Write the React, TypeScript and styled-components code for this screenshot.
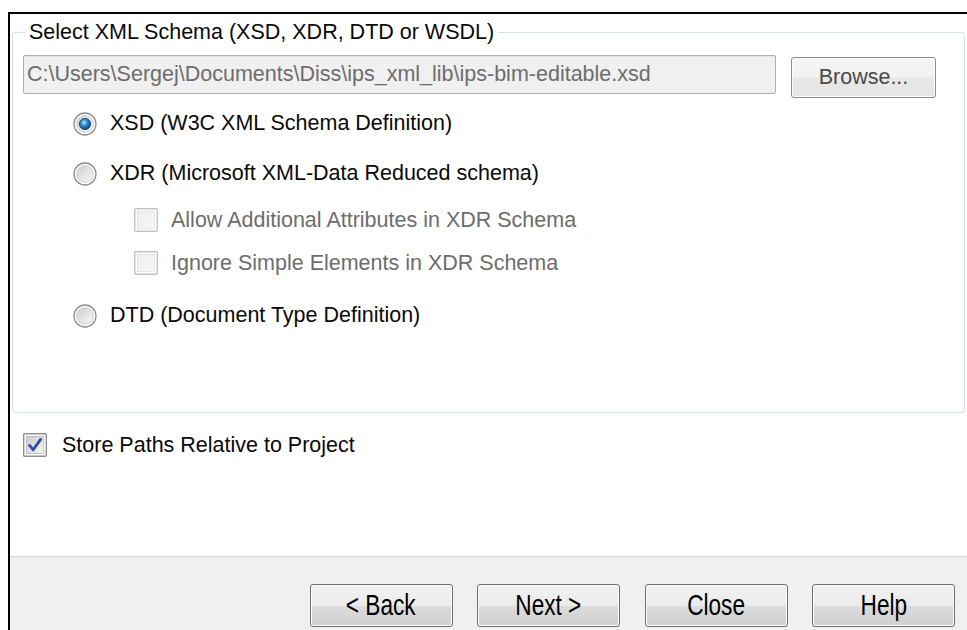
import React, { useId } from "react";
import styled, { createGlobalStyle } from "styled-components";

const GlobalStyle = createGlobalStyle`
  html, body {
    margin: 0;
    padding: 0;
    background: #ffffff;
  }
  body {
    font-family: "Liberation Sans", Arial, sans-serif;
    -webkit-font-smoothing: antialiased;
  }
`;

const Screen = styled.div`
  width: 967px;
  height: 630px;
  overflow: hidden;
  box-sizing: border-box;
  padding: 12px 0 0 8px;
  background: #ffffff;
`;

const Frame = styled.div`
  height: 100%;
  box-sizing: border-box;
  display: flex;
  flex-direction: column;
  border-top: 2px solid #000000;
  border-left: 2px solid #000000;
`;

const Body = styled.div`
  flex: 1;
  display: flex;
  flex-direction: column;
  background: #ffffff;
  padding: 6px 2px 0 2px;
`;

const GroupBox = styled.fieldset`
  margin: 0;
  min-width: 0;
  border: 1px solid #d5dfe5;
  border-radius: 3px;
  padding: 11px 28px 71px 10px;
`;

const GroupTitle = styled.legend`
  margin-left: 2px;
  padding: 0 4px;
  font-size: 21.5px;
  line-height: 24px;
  color: #0a0a0a;
`;

const PathRow = styled.div`
  display: flex;
  align-items: flex-start;
  gap: 15px;
`;

const PathField = styled.input`
  flex: 1;
  min-width: 0;
  height: 39px;
  box-sizing: border-box;
  margin: 0;
  padding: 0 3px;
  border: 1px solid #adb0b5;
  border-radius: 2px;
  background: #f0f0f0;
  box-shadow: inset 0 1px 1px rgba(0, 0, 0, 0.06);
  font-family: "Liberation Sans", Arial, sans-serif;
  font-size: 21.5px;
  color: #6d6d6d;
  outline: none;
`;

const DialogButton = styled.button<{ $wide?: boolean }>`
  flex: none;
  box-sizing: border-box;
  width: ${(p) => (p.$wide ? "145px" : "143px")};
  height: ${(p) => (p.$wide ? "41px" : "43px")};
  margin: ${(p) => (p.$wide ? "2px 0 0" : "0")};
  padding: 0;
  border: 1px solid ${(p) => (p.$wide ? "#8d8d8d" : "#707070")};
  border-radius: 3px;
  background: ${(p) =>
    p.$wide
      ? "linear-gradient(#f6f6f6 0%, #f1f1f1 50%, #e9e9e9 50%, #e4e4e4 100%)"
      : "linear-gradient(#f2f2f2 0%, #ebebeb 50%, #dddddd 50%, #cfcfcf 100%)"};
  box-shadow: inset 0 0 0 1px #fcfcfc;
  font-family: "Liberation Sans", Arial, sans-serif;
  color: ${(p) => (p.$wide ? "#4a4a4a" : "#000000")};
  font-size: ${(p) => (p.$wide ? "21.5px" : "29px")};
  display: flex;
  align-items: center;
  justify-content: center;
`;

const CondensedLabel = styled.span`
  display: inline-block;
  transform: scaleX(0.78);
  white-space: nowrap;
`;

const Options = styled.div`
  display: flex;
  flex-direction: column;
  margin-top: 0.5px;
  padding-left: 50px;
`;

const SubOptions = styled.div`
  display: flex;
  flex-direction: column;
  padding: 0 0 6px 61px;
`;

const OptionRow = styled.label<{ $radio?: boolean }>`
  display: flex;
  align-items: center;
  gap: 13px;
  height: ${(p) => (p.$radio ? "50px" : "43px")};
  font-size: 21.5px;
`;

const OptionText = styled.span<{ $disabled?: boolean }>`
  color: ${(p) => (p.$disabled ? "#6d6d6d" : "#0a0a0a")};
  white-space: nowrap;
`;

const StoreRow = styled.label`
  display: flex;
  align-items: center;
  gap: 15px;
  height: 43px;
  margin: 11px 0 0 11px;
  font-size: 21.5px;
  color: #0a0a0a;
`;

const Footer = styled.div`
  flex: none;
  height: 74px;
  box-sizing: border-box;
  display: flex;
  justify-content: flex-end;
  align-items: flex-start;
  gap: 24.5px;
  padding: 27px 12px 0 0;
  border-top: 1px solid #dadada;
  background: #f0f0f0;
`;

function RadioMark({ checked }: { checked?: boolean }) {
  const id = useId().replace(/:/g, "");
  return (
    <svg width="24" height="24" viewBox="0 0 24 24" style={{ flex: "none" }}>
      <defs>
        <linearGradient id={`face${id}`} x1="0" y1="0" x2="1" y2="1">
          <stop offset="0" stopColor="#cfcfcf" />
          <stop offset="1" stopColor="#f8f8f8" />
        </linearGradient>
        <radialGradient id={`dot${id}`} cx="0.42" cy="0.38" r="0.65">
          <stop offset="0" stopColor="#b7e3fb" />
          <stop offset="0.45" stopColor="#2f8ad0" />
          <stop offset="1" stopColor="#0b3b69" />
        </radialGradient>
      </defs>
      <circle cx="12" cy="12" r="11" fill="#fdfdfd" stroke="#8e8e8e" strokeWidth="1.3" />
      <circle cx="12" cy="12" r="8.3" fill={`url(#face${id})`} stroke="#c4c4c4" strokeWidth="0.8" />
      {checked && (
        <circle cx="12" cy="12" r="5.6" fill={`url(#dot${id})`} stroke="#17466f" strokeWidth="0.9" />
      )}
    </svg>
  );
}

function CheckMark({ checked, disabled }: { checked?: boolean; disabled?: boolean }) {
  const id = useId().replace(/:/g, "");
  return (
    <svg width="24" height="24" viewBox="0 0 24 24" style={{ flex: "none" }}>
      <defs>
        <linearGradient id={`box${id}`} x1="0" y1="0" x2="1" y2="1">
          <stop offset="0" stopColor={disabled ? "#ececec" : "#cbcbcb"} />
          <stop offset="1" stopColor={disabled ? "#f9f9f9" : "#f6f6f6"} />
        </linearGradient>
      </defs>
      <rect x="0.7" y="0.7" width="22.6" height="22.6" rx="1" fill="#ffffff" stroke={disabled ? "#c2c2c2" : "#8e8f8f"} strokeWidth="1.4" />
      <rect x="3.5" y="3.5" width="17" height="17" fill={`url(#box${id})`} stroke={disabled ? "#dedede" : "#b4b4b4"} strokeWidth="0.8" />
      {checked && (
        <path
          d="M6.6 12.4 L10.2 16.8 L17.6 6.4"
          fill="none"
          stroke="#2f4f9e"
          strokeWidth="2.8"
          strokeLinecap="round"
          strokeLinejoin="round"
        />
      )}
    </svg>
  );
}

export default function App() {
  return (
    <>
      <GlobalStyle />
      <Screen>
        <Frame>
          <Body>
            <GroupBox>
              <GroupTitle>Select XML Schema (XSD, XDR, DTD or WSDL)</GroupTitle>
              <PathRow>
                <PathField
                  readOnly
                  value="C:\Users\Sergej\Documents\Diss\ips_xml_lib\ips-bim-editable.xsd"
                />
                <DialogButton $wide>Browse...</DialogButton>
              </PathRow>
              <Options>
                <OptionRow $radio>
                  <RadioMark checked />
                  <OptionText>XSD (W3C XML Schema Definition)</OptionText>
                </OptionRow>
                <OptionRow $radio>
                  <RadioMark />
                  <OptionText>XDR (Microsoft XML-Data Reduced schema)</OptionText>
                </OptionRow>
                <SubOptions>
                  <OptionRow>
                    <CheckMark disabled />
                    <OptionText $disabled>Allow Additional Attributes in XDR Schema</OptionText>
                  </OptionRow>
                  <OptionRow>
                    <CheckMark disabled />
                    <OptionText $disabled>Ignore Simple Elements in XDR Schema</OptionText>
                  </OptionRow>
                </SubOptions>
                <OptionRow $radio>
                  <RadioMark />
                  <OptionText>DTD (Document Type Definition)</OptionText>
                </OptionRow>
              </Options>
            </GroupBox>
            <StoreRow>
              <CheckMark checked />
              <span>Store Paths Relative to Project</span>
            </StoreRow>
          </Body>
          <Footer>
            <DialogButton>
              <CondensedLabel>&lt; Back</CondensedLabel>
            </DialogButton>
            <DialogButton>
              <CondensedLabel>Next &gt;</CondensedLabel>
            </DialogButton>
            <DialogButton>
              <CondensedLabel>Close</CondensedLabel>
            </DialogButton>
            <DialogButton>
              <CondensedLabel>Help</CondensedLabel>
            </DialogButton>
          </Footer>
        </Frame>
      </Screen>
    </>
  );
}
